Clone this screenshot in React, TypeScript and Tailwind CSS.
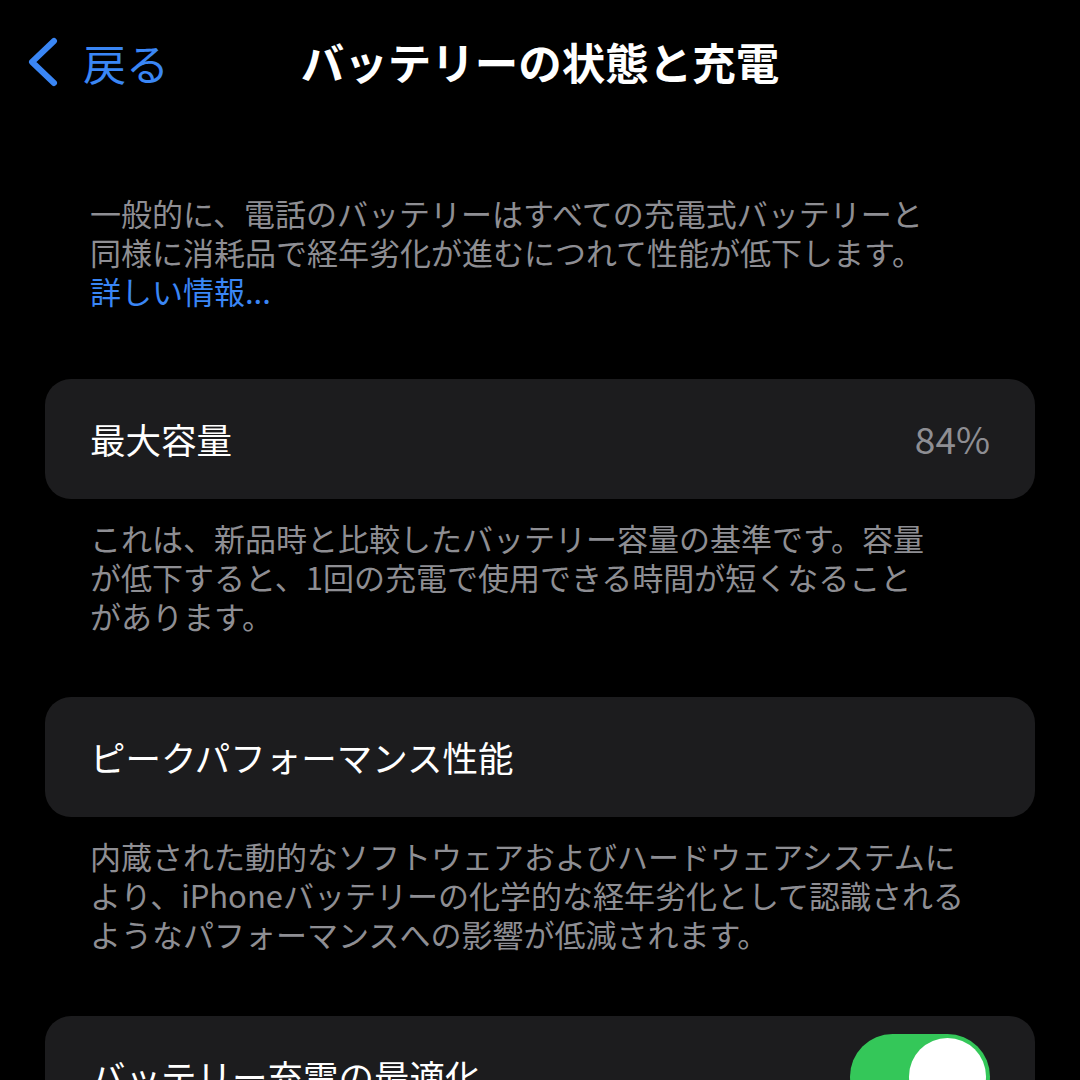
import React from 'react';

const font = { fontFamily: '"Noto Sans CJK JP", "Noto Sans", sans-serif' };

const Footer: React.FC<{ lines: string[] }> = ({ lines }) => (
  <div className="px-[90px] text-[31px] leading-[39px] text-[#8e8e93]">
    {lines.map((l, i) => (
      <div key={i} className="whitespace-nowrap">{l}</div>
    ))}
  </div>
);

const Card: React.FC<{ children: React.ReactNode }> = ({ children }) => (
  <div className="mx-[45px] h-[120px] shrink-0 rounded-[26px] bg-[#1c1c1e] px-[45px] flex items-center justify-between">
    {children}
  </div>
);

export default function App() {
  return (
    <div className="w-[1080px] h-[1080px] overflow-hidden bg-black flex flex-col" style={font}>
      {/* nav bar */}
      <div className="h-[124px] shrink-0 grid grid-cols-[1fr_auto_1fr] items-center">
        <div className="flex items-center pl-[24px] text-[#3a86f5]">
          <svg width="36" height="50" viewBox="0 0 36 50" fill="none">
            <path d="M30 4 L8 25 L30 46" stroke="currentColor" strokeWidth="6" strokeLinecap="round" strokeLinejoin="round" />
          </svg>
          <span className="ml-[23px] text-[43px] leading-none">戻る</span>
        </div>
        <div className="text-white text-[43.5px] font-bold leading-none whitespace-nowrap">バッテリーの状態と充電</div>
        <div />
      </div>

      {/* intro */}
      <div className="mt-[69px] px-[90px] text-[31px] leading-[39px] text-[#8e8e93] shrink-0">
        <div className="whitespace-nowrap">一般的に、電話のバッテリーはすべての充電式バッテリーと</div>
        <div className="whitespace-nowrap">同様に消耗品で経年劣化が進むにつれて性能が低下します。</div>
        <div className="whitespace-nowrap text-[#3a86f5]">詳しい情報...</div>
      </div>

      <div className="mt-[69px]">
        <Card>
          <span className="text-white text-[35.5px]">最大容量</span>
          <span className="text-[#8e8e93] text-[37px]">84%</span>
        </Card>
      </div>

      <div className="mt-[19px]">
        <Footer
          lines={[
            'これは、新品時と比較したバッテリー容量の基準です。容量',
            'が低下すると、1回の充電で使用できる時間が短くなること',
            'があります。',
          ]}
        />
      </div>

      <div className="mt-[62px]">
        <Card>
          <span className="text-white text-[35.5px]">ピークパフォーマンス性能</span>
        </Card>
      </div>

      <div className="mt-[19px]">
        <Footer
          lines={[
            '内蔵された動的なソフトウェアおよびハードウェアシステムに',
            'より、iPhoneバッテリーの化学的な経年劣化として認識される',
            'ようなパフォーマンスへの影響が低減されます。',
          ]}
        />
      </div>

      <div className="mt-[63px]">
        <Card>
          <span className="text-white text-[35.5px]">バッテリー充電の最適化</span>
          <div className="w-[140px] h-[85px] rounded-full bg-[#34c759] flex items-center justify-end pr-[4px]">
            <div className="w-[77px] h-[77px] rounded-full bg-white" />
          </div>
        </Card>
      </div>
    </div>
  );
}
